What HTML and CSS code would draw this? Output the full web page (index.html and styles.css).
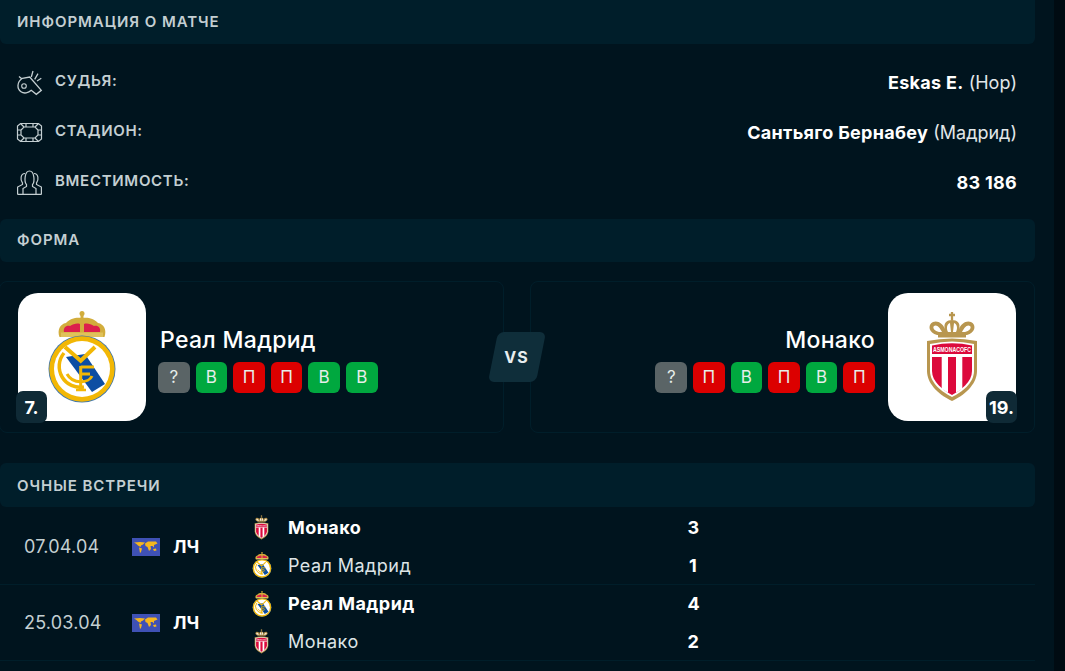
FILE: index.html
```html
<!DOCTYPE html>
<html lang="ru">
<head>
<meta charset="utf-8">
<title>Информация о матче</title>
<link rel="stylesheet" href="styles.css">
</head>
<body>
<svg class="defs" width="0" height="0" aria-hidden="true">
  <symbol id="rm" viewBox="0 0 70 92">
    <path d="M12.500 26C10 19 13 13 19 12C23 7 30 6 35 7C40 6 47 7 51 12C57 13 60 19 57.500 26Z" fill="#d2ad3c"/>
    <path d="M17 21C16 17 19 14 23 15C26 13 30 12 33 13V21ZM37 13C40 12 44 13 47 15C51 14 54 17 53 21H37Z" fill="#dc1f4c"/>
    <path d="M33.500 2h3v9h-3z" fill="#d2ad3c"/><circle cx="35" cy="2.500" r="2.500" fill="#d2ad3c"/>
    <path d="M14 21.500h42v4.500H14z" fill="#e0c25a"/>
    <circle cx="35" cy="58" r="33.500" fill="#3f76ad"/>
    <circle cx="35" cy="58" r="32.700" fill="#f2b705"/>
    <circle cx="35" cy="58" r="28" fill="#fff"/>
    <path d="M19 46L38 43L58 73L45 81Z" fill="#0d4ea3"/>
    <path d="M37 76A21 21 0 0 1 17 42" stroke="#f2b705" stroke-width="3.500" fill="none"/>
    <path d="M18 36L33.700 49.700L48 36" stroke="#f2b705" stroke-width="4" fill="none"/>
    <path d="M45 65C42 72 26 74 20 63" stroke="#f2b705" stroke-width="3" fill="none"/>
    <path d="M33.700 55V78M33.700 56H47M33.700 63H43" stroke="#f2b705" stroke-width="3" fill="none"/>
    <path d="M29 79H39" stroke="#f2b705" stroke-width="2.500"/>
  </symbol>
  <symbol id="mc" viewBox="0 0 54 92">
    <path d="M27 1v8M24 4h6" stroke="#b8964f" stroke-width="2.300" fill="none"/>
    <path d="M12 24C4 22 2 14 8 11C13 9 18 13 20 18C18 12 22 9 27 9C32 9 36 12 34 18C36 13 41 9 46 11C52 14 50 22 42 24Z" fill="#b8964f"/>
    <path d="M14 21C10 20 7 17 9 15C12 13 15 17 17 21ZM23 21C21 17 22 13 25 12L26 21ZM31 21C33 17 32 13 29 12L28 21ZM40 21C44 20 47 17 45 15C42 13 39 17 37 21Z" fill="#fff"/>
    <path d="M13 24h28v2.500H13z" fill="#b8964f"/>
    <path d="M2 30Q27 25 52 30V60C52 74 38 85 27 90C16 85 2 74 2 60Z" fill="#b8964f"/>
    <path d="M5 33Q27 28 49 33V60C49 72 37 81 27 86C17 81 5 72 5 60Z" fill="#fff"/>
    <path d="M7 34.500Q27 30 47 34.500V43H7Z" fill="#dc0a3c"/>
    <path d="M7 46H47V60C47 71 36 79 27 84C18 79 7 71 7 60Z" fill="#dc0a3c"/>
    <path d="M16.700 46h6.300v35.800l-6.300-4zM31 46h6.300v31.800l-6.300 4z" fill="#fff"/>
    <text x="27" y="41" class="crest-text" textLength="38" lengthAdjust="spacingAndGlyphs" text-anchor="middle">ASMONACOFC</text>
  </symbol>
  <symbol id="wf" viewBox="0 0 28 18">
    <path d="M0 0h28v18H0z" fill="#3f51b5"/>
    <path d="M2 4.500L8 4L13 4.500L11 6.500L9 7.500L8.500 9L6 7.500L4.500 6ZM7 9.500L10 10.500L9 14L8 15ZM13 5.500L16 3.500L24 3.500L25.500 5.500L22 7L22 9.500L20.500 8L18.500 8L19 11L17 13L15.500 9L13.500 8ZM21 11L24 10.500L24.500 12.500L22 13Z" fill="#f5b61e"/>
  </symbol>
</svg>
<div class="page">
  <main class="main">
    <h2 class="bar bar-first">Информация о матче</h2>
    <section class="info">
      <div class="info-row">
        <svg class="info-icon" viewBox="0 0 25 25"><path d="M5.300 8.300L12.700 7L24.300 20.300L19.300 24.300L14.300 20.300C11.500 23 7 24 4 21.700C0 19 -.5 12.500 5.300 8.300ZM2 6.500L5 9M16 1L14.300 7M21 3.700L17.700 9.300M24.300 8.300L20 11" fill="none" stroke="currentColor" stroke-width="1.300"/><circle cx="7" cy="16" r="2.300" fill="none" stroke="currentColor" stroke-width="1.100"/></svg>
        <span class="info-label">Судья:</span>
        <span class="info-value"><b>Eskas E.</b> (Нор)</span>
      </div>
      <div class="info-row">
        <svg class="info-icon" viewBox="0 0 25 25"><path d="M3.500 3.500h18l3 2.500v13l-3 2.500h-18l-3-2.500V6ZM7 7h11l3 3v5l-3 3H7l-3-3v-5ZM3.500 3.500L7 7M21.500 3.500L18 7M3.500 21.500L7 18M21.500 21.500L18 18M.5 10H4M21 10h3.500M.5 15H4M21 15h3.500M9 4v3M16 4v3M9 18v3M16 18v3" fill="none" stroke="currentColor" stroke-width="1.200"/></svg>
        <span class="info-label">Стадион:</span>
        <span class="info-value"><b>Сантьяго Бернабеу</b> (Мадрид)</span>
      </div>
      <div class="info-row">
        <svg class="info-icon" viewBox="0 0 25 25"><path d="M.6 24.400H24.400M.6 24.400V17L5.500 14.500V13C3 10 3.500 3.500 8 3.500M24.400 24.400V17L19.500 14.500V13C22 10 21.500 3.500 17 3.500M6 24.400V18.500L9.500 16.500V14.500C7 12 7.500 1 12.500 1S18 12 15.500 14.500V16.500L19 18.500V24.400" fill="none" stroke="currentColor" stroke-width="1.200"/></svg>
        <span class="info-label">Вместимость:</span>
        <span class="info-value"><b>83 186</b></span>
      </div>
    </section>
    <h2 class="bar">Форма</h2>
    <section class="form">
      <article class="team">
        <div class="logo">
          <svg class="crest-rm"><use href="#rm"/></svg>
          <span class="rank rank-left">7.</span>
        </div>
        <div class="team-body">
          <div class="team-name">Реал Мадрид</div>
          <div class="badges">
            <span class="badge q">?</span><span class="badge w">В</span><span class="badge l">П</span><span class="badge l">П</span><span class="badge w">В</span><span class="badge w">В</span>
          </div>
        </div>
      </article>
      <div class="vs">VS</div>
      <article class="team team-away">
        <div class="team-body">
          <div class="team-name">Монако</div>
          <div class="badges">
            <span class="badge q">?</span><span class="badge l">П</span><span class="badge w">В</span><span class="badge l">П</span><span class="badge w">В</span><span class="badge l">П</span>
          </div>
        </div>
        <div class="logo">
          <svg class="crest-mc"><use href="#mc"/></svg>
          <span class="rank rank-right">19.</span>
        </div>
      </article>
    </section>
    <h2 class="bar bar-last">Очные встречи</h2>
    <section class="h2h">
      <div class="match">
        <div class="date">07.04.04</div>
        <svg class="flag"><use href="#wf"/></svg>
        <div class="league">ЛЧ</div>
        <div class="sides">
          <div class="side"><span class="mini"><svg class="mini-mc"><use href="#mc"/></svg></span><span class="side-name win">Монако</span><span class="score">3</span></div>
          <div class="side"><span class="mini"><svg class="mini-rm"><use href="#rm"/></svg></span><span class="side-name">Реал Мадрид</span><span class="score">1</span></div>
        </div>
      </div>
      <div class="match">
        <div class="date">25.03.04</div>
        <svg class="flag"><use href="#wf"/></svg>
        <div class="league">ЛЧ</div>
        <div class="sides">
          <div class="side"><span class="mini"><svg class="mini-rm"><use href="#rm"/></svg></span><span class="side-name win">Реал Мадрид</span><span class="score">4</span></div>
          <div class="side"><span class="mini"><svg class="mini-mc"><use href="#mc"/></svg></span><span class="side-name">Монако</span><span class="score">2</span></div>
        </div>
      </div>
    </section>
  </main>
  <div class="gutter"></div>
  <div class="edge"></div>
</div>
</body>
</html>
```
FILE: styles.css
```css
* { box-sizing: border-box; }
html, body { margin: 0; height: 100%; overflow: hidden; }
body { background: #00141e; color: #fff; font-family: Inter, "Noto Sans", sans-serif; }
.defs { position: absolute; }
.page { display: flex; height: 671px; }
.main { width: 1035px; flex: none; }
.gutter { width: 19px; flex: none; }
.edge { flex: 1; background: #000b12; }

.bar {
  margin: 0;
  height: 43px;
  padding: 0 17px 2px;
  display: flex;
  align-items: center;
  background: #001e2a;
  border-radius: 6px;
  color: #c4cfd2;
  font-size: 15px;
  font-weight: 600;
  letter-spacing: 0.95px;
  text-transform: uppercase;
}
.bar-first { height: 44px; border-radius: 0 0 6px 6px; }
.bar-last { height: 44px; padding-bottom: 0; }

.info { padding: 13px 18px 12px 17px; }
.info-row { height: 50px; display: flex; align-items: center; color: #c4cfd2; }
.info-icon { width: 25px; height: 25px; flex: none; margin-right: 13px; color: #c4cfd2; overflow: visible; }
.info-label { font-size: 15px; font-weight: 600; letter-spacing: 0.7px; text-transform: uppercase; position: relative; top: -2px; }
.info-value { margin-left: auto; font-size: 18px; color: #e2e7e9; }
.info-value b { color: #fff; font-weight: 700; letter-spacing: 0.3px; }

.form { display: flex; align-items: center; gap: 26px; padding: 19px 0 30px; position: relative; }
.team {
  flex: 1;
  height: 152px;
  display: flex;
  align-items: center;
  padding: 0 18px;
  gap: 12px;
  border: 1px solid #001e2a;
  border-radius: 8px;
  margin-left: -1px;
}
.team-away { margin-left: 0; justify-content: flex-end; gap: 13px; }
.team-body { display: flex; flex-direction: column; gap: 7px; margin-top: 3px; }
.team-away .team-body { align-items: flex-end; }
.team-name { font-size: 23px; font-weight: 500; line-height: 30px; letter-spacing: 0.3px; padding-left: 2px; }
.logo {
  width: 128px; height: 128px; flex: none;
  background: #fff; border-radius: 20px;
  position: relative;
  display: flex; align-items: center; justify-content: center;
}
.crest-rm { width: 70px; height: 92px; }
.crest-mc { width: 54px; height: 92px; }
.crest-text { font-family: "Liberation Sans", sans-serif; font-size: 6.5px; font-weight: 700; fill: #fff; }
.rank {
  position: absolute; bottom: -2px; height: 32px; min-width: 31px; padding: 0 2px;
  display: flex; align-items: center; justify-content: center;
  background: #0f2a36; color: #fff; border-radius: 7px;
  font-size: 18px; font-weight: 700;
}
.rank-left { left: -2px; }
.rank-right { right: -1px; }
.badges { display: flex; gap: 6px; }
.badge {
  width: 31.600px; height: 31px; border-radius: 6px;
  display: flex; align-items: center; justify-content: center;
  font-size: 17px; font-weight: 400; color: #e6eeea;
}
.badge.q { background: #5a6466; }
.badge.w { background: #00a83f; }
.badge.l { background: #dc0000; }

.vs {
  position: absolute; left: 486px; top: 70px; z-index: 1;
  width: 61px; height: 50px;
  display: flex; align-items: center; justify-content: center;
  font-size: 16px; font-weight: 700; letter-spacing: 1px; color: #e8eeef;
}
.vs::before {
  content: ""; position: absolute; inset: 0 6.500px; z-index: -1;
  background: #0f2e3a; border-radius: 6px;
  transform: skewX(-11.300deg);
}

.h2h { padding-top: 2px; }
.match {
  height: 76px;
  display: flex;
  align-items: center;
  border-bottom: 1px solid #001e2a;
  padding-left: 24px;
}
.date { width: 108px; font-size: 18px; color: #c4cfd2; letter-spacing: 0.2px; }
.flag { width: 28px; height: 18px; flex: none; }
.league { width: 90px; padding-left: 13px; font-size: 18px; font-weight: 700; }
.sides { flex: 1; display: flex; flex-direction: column; }
.side { height: 37.500px; display: flex; align-items: center; font-size: 18px; letter-spacing: 0.45px; color: #dde4e6; }
.mini { width: 23px; height: 26px; margin-right: 15px; display: flex; justify-content: center; align-items: center; }
.mini-rm { width: 20px; height: 26px; }
.mini-mc { width: 15px; height: 25px; }
.side-name { width: 399.500px; }
.side-name.win { font-weight: 700; color: #fff; }
.score { width: 11px; text-align: center; font-weight: 700; color: #fff; font-size: 18px; letter-spacing: 0; }
```
